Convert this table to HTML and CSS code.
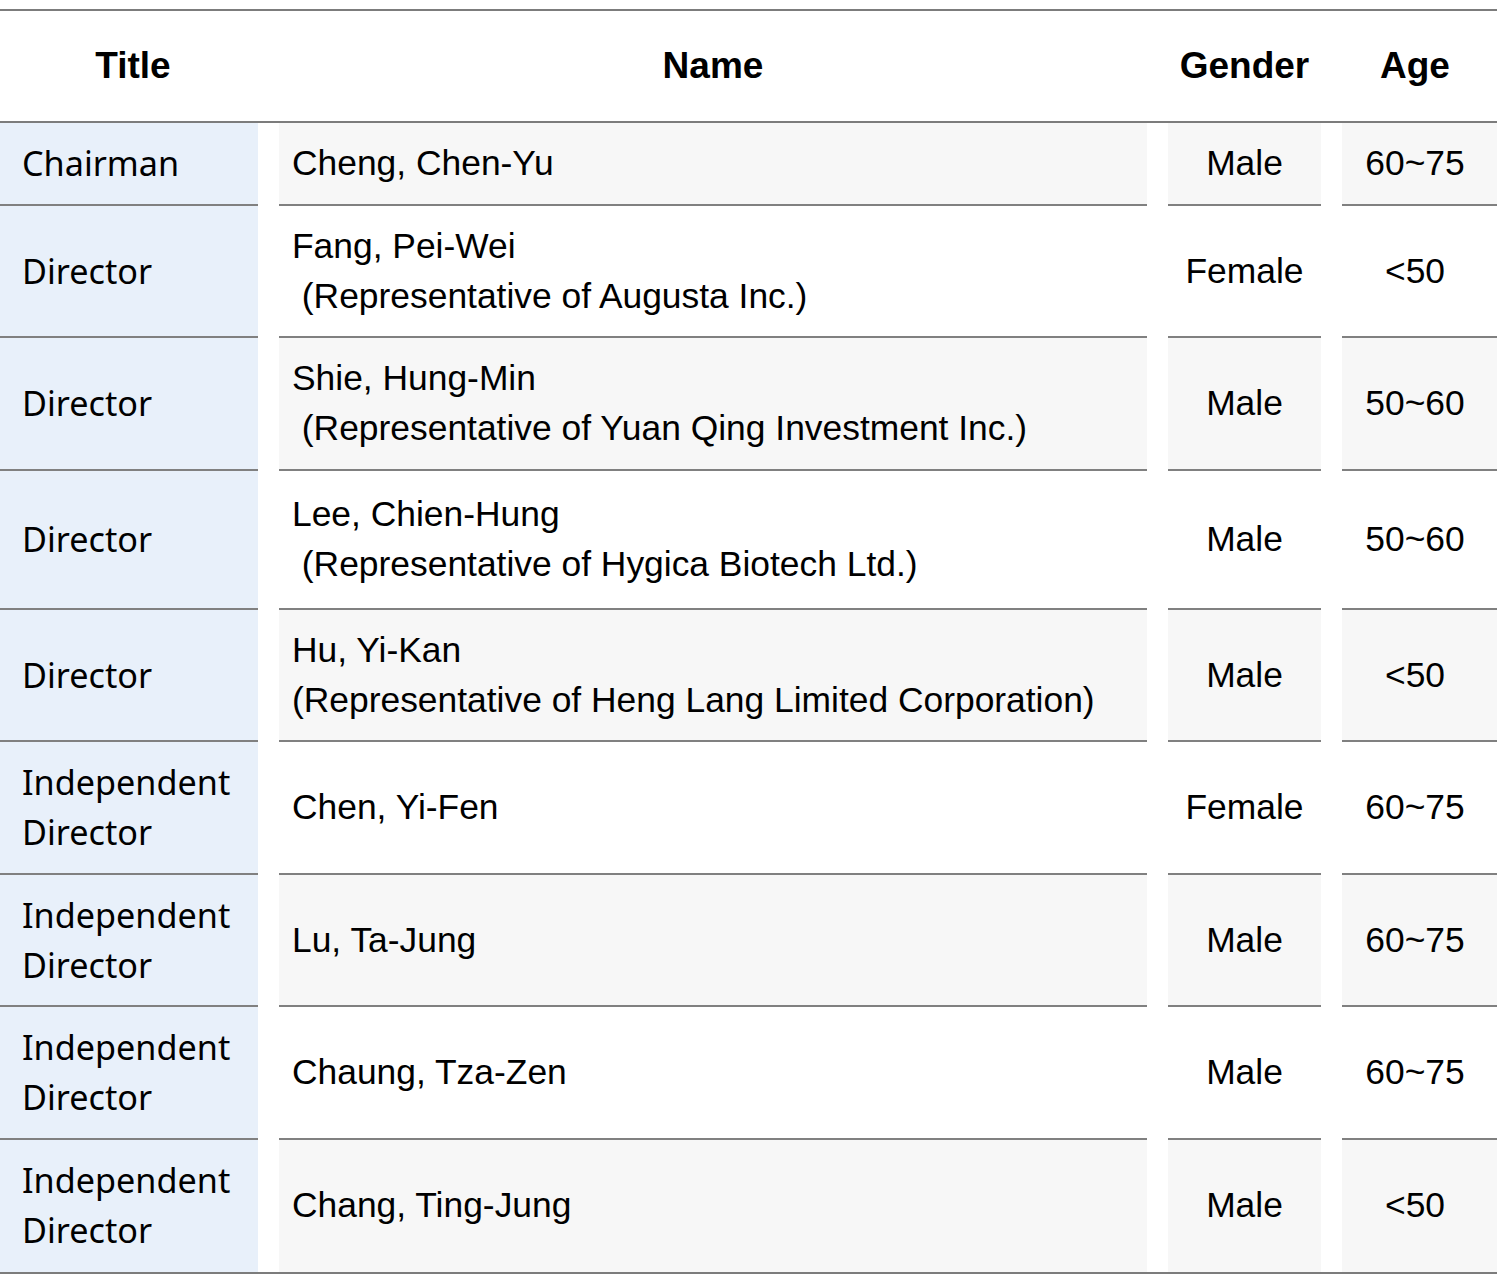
FILE: index.html
```html
<!DOCTYPE html>
<html lang="en">
<head>
<meta charset="utf-8">
<title>Board of Directors</title>
<link rel="stylesheet" href="styles.css">
</head>
<body>
<div class="board">
  <div class="thead">
    <div class="th th-title">Title</div>
    <div class="th">Name</div>
    <div class="th">Gender</div>
    <div class="th th-age">Age</div>
  </div>
  <div class="tbody">
    <div class="row shade">
      <div class="cell title">Chairman</div>
      <div class="cell name">Cheng, Chen-Yu</div>
      <div class="cell mid">Male</div>
      <div class="cell mid age">60~75</div>
    </div>
    <div class="row">
      <div class="cell title">Director</div>
      <div class="cell name">Fang, Pei-Wei<br>&nbsp;(Representative of Augusta Inc.)</div>
      <div class="cell mid">Female</div>
      <div class="cell mid age">&lt;50</div>
    </div>
    <div class="row shade">
      <div class="cell title">Director</div>
      <div class="cell name">Shie, Hung-Min<br>&nbsp;(Representative of Yuan Qing Investment Inc.)</div>
      <div class="cell mid">Male</div>
      <div class="cell mid age">50~60</div>
    </div>
    <div class="row tall">
      <div class="cell title">Director</div>
      <div class="cell name">Lee, Chien-Hung<br>&nbsp;(Representative of Hygica Biotech Ltd.)</div>
      <div class="cell mid">Male</div>
      <div class="cell mid age">50~60</div>
    </div>
    <div class="row shade">
      <div class="cell title">Director</div>
      <div class="cell name">Hu, Yi-Kan<br>(Representative of Heng Lang Limited Corporation)</div>
      <div class="cell mid">Male</div>
      <div class="cell mid age">&lt;50</div>
    </div>
    <div class="row">
      <div class="cell title">Independent<br>Director</div>
      <div class="cell name">Chen, Yi-Fen</div>
      <div class="cell mid">Female</div>
      <div class="cell mid age">60~75</div>
    </div>
    <div class="row shade">
      <div class="cell title">Independent<br>Director</div>
      <div class="cell name">Lu, Ta-Jung</div>
      <div class="cell mid">Male</div>
      <div class="cell mid age">60~75</div>
    </div>
    <div class="row">
      <div class="cell title">Independent<br>Director</div>
      <div class="cell name">Chaung, Tza-Zen</div>
      <div class="cell mid">Male</div>
      <div class="cell mid age">60~75</div>
    </div>
    <div class="row shade last">
      <div class="cell title">Independent<br>Director</div>
      <div class="cell name">Chang, Ting-Jung</div>
      <div class="cell mid">Male</div>
      <div class="cell mid age">&lt;50</div>
    </div>
  </div>
</div>
</body>
</html>
```

FILE: styles.css
```css
html, body {
  margin: 0;
  padding: 0;
  background: #ffffff;
}

body {
  padding-top: 9px;
  color: #000000;
  font-family: "Liberation Sans", Arial, sans-serif;
}

.board {
  width: 1497px;
}

.thead,
.row {
  display: grid;
  grid-template-columns: 258px 868px 153px 155px;
  column-gap: 21px;
}

.thead {
  border-top: 2px solid #7c7c7c;
  border-bottom: 2px solid #7c7c7c;
  height: 110px;
  align-items: center;
}

.th {
  font-weight: bold;
  font-size: 37px;
  text-align: center;
  line-height: 50px;
}

.th-title {
  padding-left: 8px;
}

.th-age {
  padding-right: 9px;
}

.tbody {
  border-bottom: 2px solid #7c7c7c;
}

.cell {
  display: flex;
  align-items: center;
  font-size: 35.4px;
  line-height: 50px;
  padding-top: 15.25px;
  padding-bottom: 15.25px;
  border-bottom: 2px solid #808080;
  background: #ffffff;
}

.row.last .cell {
  border-bottom: none;
  padding-bottom: 17.25px;
}

.row.tall .cell {
  padding-top: 18.5px;
  padding-bottom: 18.5px;
}

.row.shade .cell {
  background: #f7f7f7;
}

.row .cell.title {
  background: #e8f0fa;
  font-family: "Noto Sans", "Open Sans", sans-serif;
  font-size: 34.2px;
  padding-left: 22px;
}

.cell.name {
  padding-left: 13px;
}

.cell.mid {
  justify-content: center;
  text-align: center;
}

.cell.age {
  padding-right: 9px;
}
```
